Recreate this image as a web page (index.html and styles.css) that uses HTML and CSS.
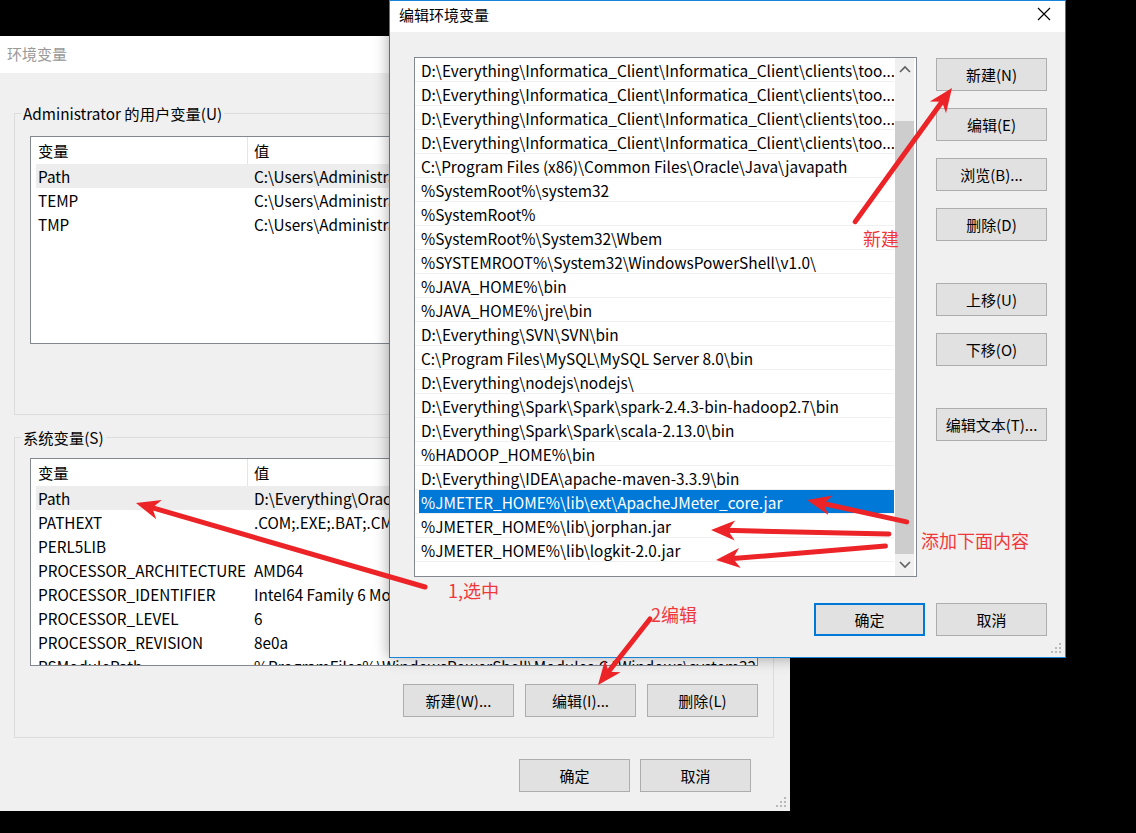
FILE: index.html
```html
<!DOCTYPE html>
<html lang="zh-CN">
  <head>
    <meta charset="UTF-8" />
    <meta name="viewport" content="width=device-width, initial-scale=1.0" />
    <title>编辑环境变量</title>
    <link rel="stylesheet" href="styles.css">
  </head>
  <body>
    <div class="desktop">
      <!-- 뒤쪽 창: 环境变量 -->
      <div class="win env">
        <div class="titlebar">环境变量</div>
        <div class="env-body">
          <fieldset class="group user">
            <legend>Administrator 的用户变量(U)</legend>
            <div class="listview">
              <div class="lv-head"><span>变量</span><span>值</span></div>
              <div class="lv-row sel"><span>Path</span><span>C:\Users\Administrator\AppData\Local\Microsoft\WindowsApps;</span></div>
              <div class="lv-row"><span>TEMP</span><span>C:\Users\Administrator\AppData\Local\Temp</span></div>
              <div class="lv-row"><span>TMP</span><span>C:\Users\Administrator\AppData\Local\Temp</span></div>
            </div>
          </fieldset>
          <fieldset class="group sys">
            <legend>系统变量(S)</legend>
            <div class="listview">
              <div class="lv-head"><span>变量</span><span>值</span></div>
              <div class="lv-row sel"><span>Path</span><span>D:\Everything\Oracle\product\11.2.0\dbhome_1\bin;</span></div>
              <div class="lv-row"><span>PATHEXT</span><span>.COM;.EXE;.BAT;.CMD;.VBS;.VBE;.JS;.JSE;.WSF;.WSH;.MSC</span></div>
              <div class="lv-row"><span>PERL5LIB</span><span></span></div>
              <div class="lv-row"><span>PROCESSOR_ARCHITECTURE</span><span>AMD64</span></div>
              <div class="lv-row"><span>PROCESSOR_IDENTIFIER</span><span>Intel64 Family 6 Model 142 Stepping 10, GenuineIntel</span></div>
              <div class="lv-row"><span>PROCESSOR_LEVEL</span><span>6</span></div>
              <div class="lv-row"><span>PROCESSOR_REVISION</span><span>8e0a</span></div>
              <div class="lv-row"><span>PSModulePath</span><span>%ProgramFiles%\WindowsPowerShell\Modules;C:\Windows\system32</span></div>
            </div>
            <div class="btn-row">
              <button class="btn">新建(W)...</button>
              <button class="btn">编辑(I)...</button>
              <button class="btn">删除(L)</button>
            </div>
          </fieldset>
          <div class="btn-row foot">
            <button class="btn">确定</button>
            <button class="btn">取消</button>
          </div>
        </div>
        <svg class="grip" width="12" height="12" viewBox="0 0 12 12">
          <rect x="9" y="1" width="2" height="2" />
          <rect x="5" y="5" width="2" height="2" /><rect x="9" y="5" width="2" height="2" />
          <rect x="1" y="9" width="2" height="2" /><rect x="5" y="9" width="2" height="2" /><rect x="9" y="9" width="2" height="2" />
        </svg>
      </div>

      <!-- 앞쪽 창: 编辑环境变量 -->
      <div class="win edit">
        <div class="titlebar">
          <span>编辑环境变量</span>
          <span class="close">
            <svg width="14" height="14" viewBox="0 0 14 14"><path d="M1 1 L13 13 M13 1 L1 13" stroke="#000" stroke-width="1.2" fill="none" /></svg>
          </span>
        </div>
        <div class="edit-body">
          <div class="plist">
            <div class="items" id="items"></div>
            <div class="vscroll">
              <div class="arrow">
                <svg width="12" height="8" viewBox="0 0 12 8"><path d="M1 7 L6 2 L11 7" stroke="#606060" stroke-width="1.6" fill="none" /></svg>
              </div>
              <div class="thumb"></div>
              <div class="arrow">
                <svg width="12" height="8" viewBox="0 0 12 8"><path d="M1 1 L6 6 L11 1" stroke="#606060" stroke-width="1.6" fill="none" /></svg>
              </div>
            </div>
          </div>
          <div class="side">
            <button class="btn">新建(N)</button>
            <button class="btn">编辑(E)</button>
            <button class="btn">浏览(B)...</button>
            <button class="btn">删除(D)</button>
            <button class="btn far">上移(U)</button>
            <button class="btn">下移(O)</button>
            <button class="btn far">编辑文本(T)...</button>
          </div>
          <div class="btn-row foot">
            <button class="btn default">确定</button>
            <button class="btn">取消</button>
          </div>
        </div>
        <svg class="grip" width="12" height="12" viewBox="0 0 12 12">
          <rect x="9" y="1" width="2" height="2" />
          <rect x="5" y="5" width="2" height="2" /><rect x="9" y="5" width="2" height="2" />
          <rect x="1" y="9" width="2" height="2" /><rect x="5" y="9" width="2" height="2" /><rect x="9" y="9" width="2" height="2" />
        </svg>
      </div>

      <!-- 빨간 주석 -->
      <svg class="notes" width="1136" height="833" viewBox="0 0 1136 833">
        <g fill="#ec2327" stroke="#ec2327">
          <g transform="translate(952 88) rotate(-54.1)">
            <line x1="-165" y1="0" x2="-14" y2="0" stroke-width="5" stroke-linecap="round" />
            <polygon points="0,0 -24,-10 -17,0 -24,10" stroke="none" />
          </g>
          <g transform="translate(136 503) rotate(-163.8)">
            <line x1="-301" y1="0" x2="-14" y2="0" stroke-width="5" stroke-linecap="round" />
            <polygon points="0,0 -24,-10 -17,0 -24,10" stroke="none" />
          </g>
          <g transform="translate(598 685) rotate(128.2)">
            <line x1="-84" y1="0" x2="-14" y2="0" stroke-width="5" stroke-linecap="round" />
            <polygon points="0,0 -24,-10 -17,0 -24,10" stroke="none" />
          </g>
          <g transform="translate(807 500) rotate(-167.6)">
            <line x1="-102" y1="0" x2="-14" y2="0" stroke-width="5" stroke-linecap="round" />
            <polygon points="0,0 -24,-10 -17,0 -24,10" stroke="none" />
          </g>
          <g transform="translate(711 530) rotate(-178.7)">
            <line x1="-178" y1="0" x2="-14" y2="0" stroke-width="5" stroke-linecap="round" />
            <polygon points="0,0 -24,-10 -17,0 -24,10" stroke="none" />
          </g>
          <g transform="translate(716 560) rotate(175.3)">
            <line x1="-170" y1="0" x2="-14" y2="0" stroke-width="5" stroke-linecap="round" />
            <polygon points="0,0 -24,-10 -17,0 -24,10" stroke="none" />
          </g>
        </g>
        <g class="note-text">
          <text x="863" y="246">新建</text>
          <text x="921" y="548">添加下面内容</text>
          <text x="448" y="598">1,选中</text>
          <text x="651" y="622">2编辑</text>
        </g>
      </svg>
    </div>

    <script>
      const paths = [
        "D:\\Everything\\Informatica_Client\\Informatica_Client\\clients\\too...",
        "D:\\Everything\\Informatica_Client\\Informatica_Client\\clients\\too...",
        "D:\\Everything\\Informatica_Client\\Informatica_Client\\clients\\too...",
        "D:\\Everything\\Informatica_Client\\Informatica_Client\\clients\\too...",
        "C:\\Program Files (x86)\\Common Files\\Oracle\\Java\\javapath",
        "%SystemRoot%\\system32",
        "%SystemRoot%",
        "%SystemRoot%\\System32\\Wbem",
        "%SYSTEMROOT%\\System32\\WindowsPowerShell\\v1.0\\",
        "%JAVA_HOME%\\bin",
        "%JAVA_HOME%\\jre\\bin",
        "D:\\Everything\\SVN\\SVN\\bin",
        "C:\\Program Files\\MySQL\\MySQL Server 8.0\\bin",
        "D:\\Everything\\nodejs\\nodejs\\",
        "D:\\Everything\\Spark\\Spark\\spark-2.4.3-bin-hadoop2.7\\bin",
        "D:\\Everything\\Spark\\Spark\\scala-2.13.0\\bin",
        "%HADOOP_HOME%\\bin",
        "D:\\Everything\\IDEA\\apache-maven-3.3.9\\bin",
        "%JMETER_HOME%\\lib\\ext\\ApacheJMeter_core.jar",
        "%JMETER_HOME%\\lib\\jorphan.jar",
        "%JMETER_HOME%\\lib\\logkit-2.0.jar",
        "",
      ];
      const selected = 18;
      const items = document.getElementById("items");

      paths.forEach((p, i) => {
        const row = document.createElement("div");
        row.className = "item" + (i === selected ? " sel" : "");
        const txt = document.createElement("span");
        txt.className = "txt";
        txt.textContent = p;
        row.appendChild(txt);
        items.appendChild(row);
      });
    </script>
  </body>
</html>
```

FILE: styles.css
```css
html,
body {
  margin: 0;
  padding: 0;
  background: #000;
  overflow: hidden;
  font-family: "Noto Sans CJK SC", sans-serif;
  font-size: 15px;
  color: #000;
}

.desktop {
  position: relative;
  width: 1136px;
  height: 833px;
}

.win {
  position: absolute;
  box-sizing: border-box;
  background: #f0f0f0;
}

.titlebar {
  background: #fff;
  white-space: nowrap;
}

.btn {
  box-sizing: border-box;
  width: 111px;
  height: 33px;
  padding: 0;
  margin: 0;
  border: 1px solid #adadad;
  background: #e1e1e1;
  color: #000;
  font-family: inherit;
  font-size: 15px;
}
.btn.default {
  border: 2px solid #0078d7;
}

.btn-row {
  display: flex;
  justify-content: flex-end;
}

.grip {
  position: absolute;
  right: 3px;
  bottom: 3px;
  fill: #b9b9b9;
}

/* 环境变量 (뒤쪽 창) */
.env {
  left: 0;
  top: 36px;
  width: 790px;
  height: 775px;
}
.env .titlebar {
  height: 37px;
  line-height: 36px;
  padding-left: 7px;
  color: #999;
}
.env-body {
  padding: 30px 0 0 14px;
}

.group {
  box-sizing: border-box;
  width: 760px;
  margin: 0;
  padding: 0 15px 70px;
  border: 1px solid #dcdcdc;
  min-width: 0;
}
.group legend {
  margin-left: -9px;
  padding: 0 2px;
  line-height: 20px;
  font-size: 15.3px;
  color: #000;
}
.group.user .listview {
  margin-top: 13px;
}
.group.sys {
  margin-top: 12px;
  padding-bottom: 20px;
}
.group.sys .listview {
  margin-top: 11px;
}
.group.sys .btn-row {
  margin-top: 18px;
  gap: 11px;
}

.listview {
  box-sizing: border-box;
  height: 208px;
  border: 1px solid #828790;
  background: #fff;
  padding-left: 5px;
  overflow: hidden;
  font-size: 15.3px;
}
.lv-head,
.lv-row {
  display: grid;
  grid-template-columns: 212px 1fr;
  white-space: nowrap;
}
.lv-head {
  height: 27px;
  line-height: 27px;
}
.lv-head span:first-child {
  border-right: 1px solid #e5e5e5;
}
.lv-row {
  height: 24px;
  line-height: 24px;
}
.lv-head span,
.lv-row span {
  overflow: hidden;
}
.lv-head span:first-child,
.lv-row span:first-child {
  padding-left: 2px;
}
.lv-head span:last-child,
.lv-row span:last-child {
  padding-left: 6px;
}
.lv-row.sel {
  background: #ededed;
}

.env .foot {
  margin: 21px 39px 0 0;
  gap: 10px;
}

/* 编辑环境变量 (앞쪽 창) */
.edit {
  left: 389px;
  top: 0;
  width: 677px;
  height: 658px;
  border: 1px solid #1883d7;
  box-shadow: 0 0 14px rgba(0, 0, 0, 0.35);
  z-index: 2;
}
.edit .titlebar {
  display: flex;
  justify-content: space-between;
  height: 31px;
  line-height: 28px;
  padding-left: 9px;
}
.edit .close {
  width: 42px;
  display: flex;
  justify-content: center;
  padding-top: 6px;
  box-sizing: border-box;
}
.edit-body {
  display: grid;
  grid-template-columns: 503px 111px;
  column-gap: 19px;
  padding: 25px 18px 0 24px;
}

.plist {
  box-sizing: border-box;
  height: 520px;
  display: flex;
  border: 1px solid #828790;
  background: #fff;
  overflow: hidden;
  font-size: 15.4px;
}
.items {
  flex: 1;
  min-width: 0;
}
.item {
  height: 23px;
  line-height: 25px;
  border-bottom: 1px solid #f0f0f0;
  white-space: nowrap;
  overflow: hidden;
  display: flex;
}
.item .txt {
  flex: 1;
  margin-left: 4px;
  padding-left: 2px;
  overflow: hidden;
}
.item.sel .txt {
  background: #0078d7;
  color: #fff;
}

.vscroll {
  width: 19px;
  margin: 0 2px 0 1px;
  background: #f0f0f0;
  display: flex;
  flex-direction: column;
}
.vscroll .arrow {
  height: 22px;
  display: flex;
  align-items: center;
  justify-content: center;
}
.vscroll .thumb {
  height: 433px;
  margin-top: 41px;
  background: #cdcdcd;
}

.side {
  display: flex;
  flex-direction: column;
  padding-top: 1px;
}
.side .btn + .btn {
  margin-top: 17px;
}
.side .btn.far {
  margin-top: 42px;
}

.edit .foot {
  grid-column: 1 / span 2;
  margin-top: 26px;
  gap: 11px;
}

/* 주석 레이어 */
.notes {
  position: absolute;
  left: 0;
  top: 0;
  z-index: 5;
  pointer-events: none;
}
.note-text text {
  font-family: "Noto Sans CJK SC", sans-serif;
  font-size: 18px;
  fill: #f0383b;
}
```
